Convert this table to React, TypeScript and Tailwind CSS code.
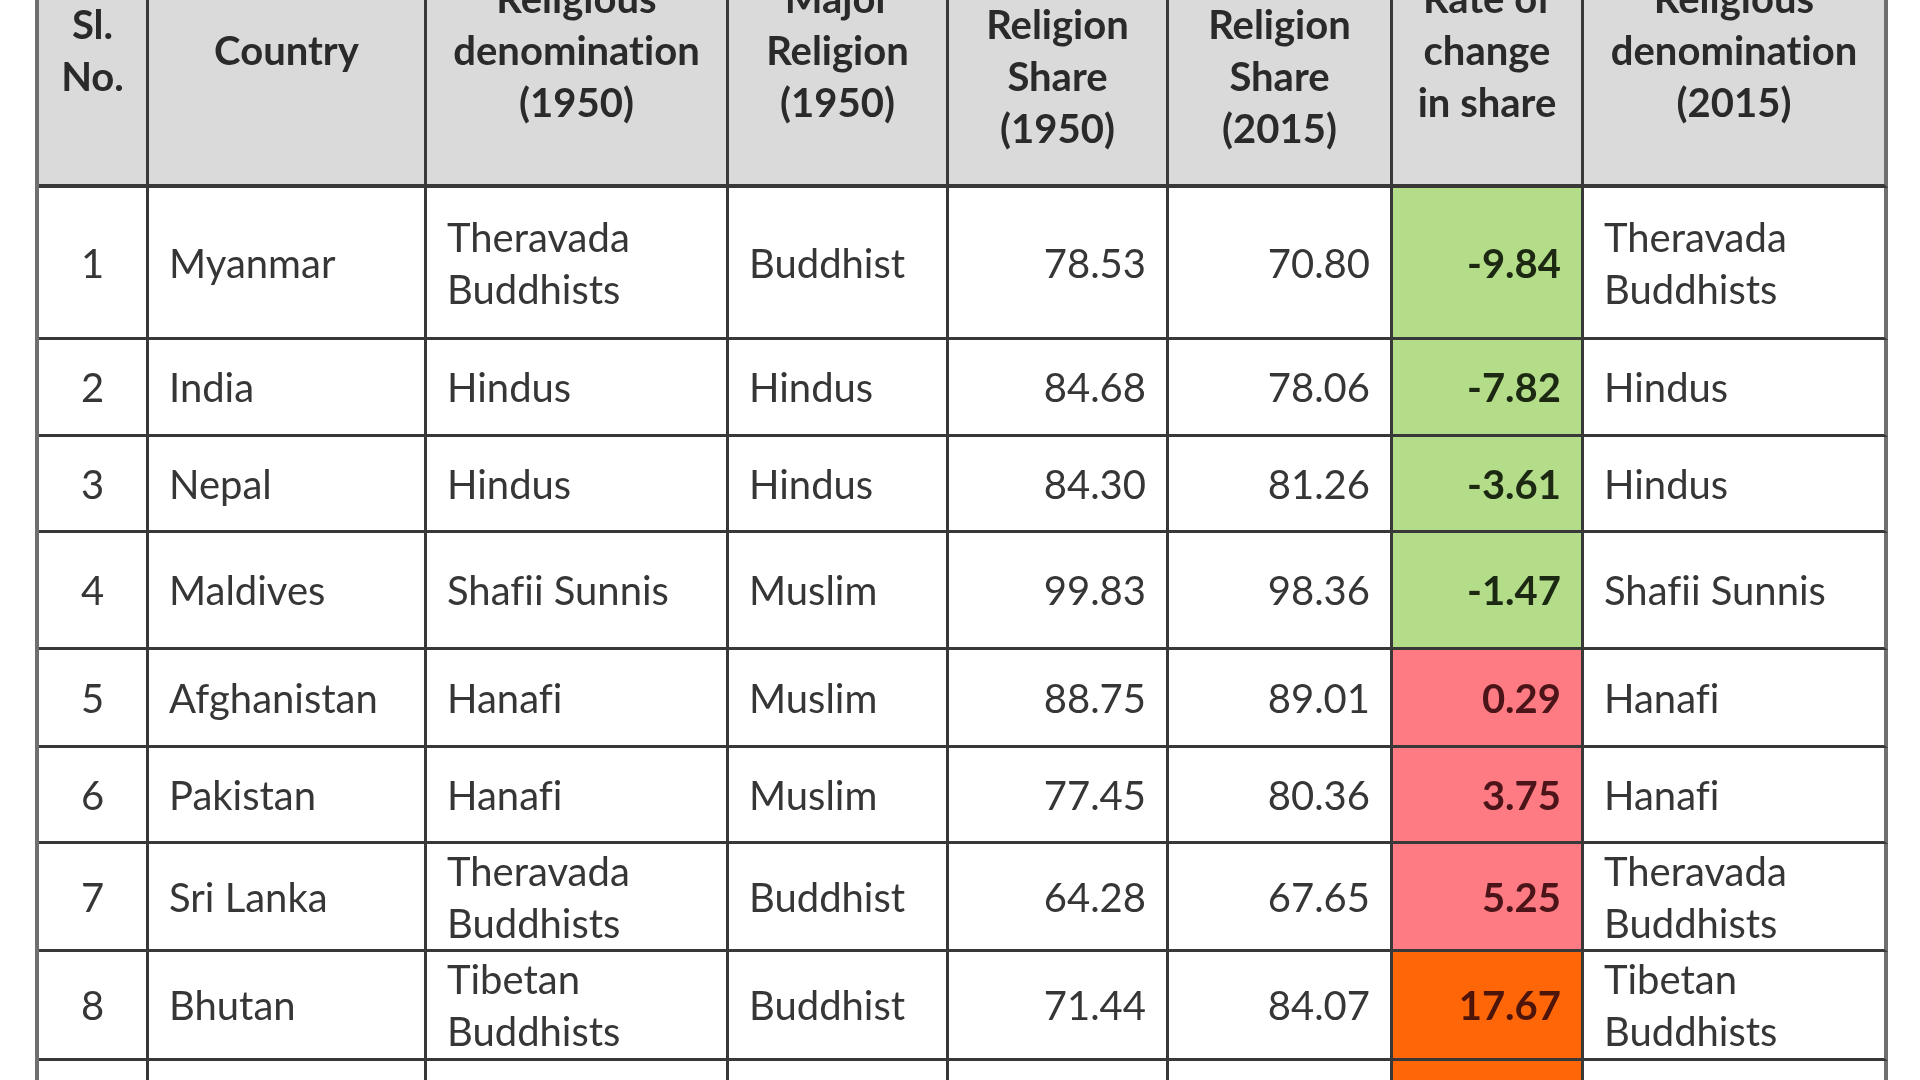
import React from "react";

type Tone = "green" | "pink" | "orange";

interface Row {
  no: number;
  country: string;
  denom1950: string[];
  major: string;
  share1950: string;
  share2015: string;
  rate: string;
  tone: Tone;
  denom2015: string[];
}

const headers: string[][] = [
  ["Sl.", "No."],
  ["Country"],
  ["Religious", "denomination", "(1950)"],
  ["Major", "Religion", "(1950)"],
  ["Major", "Religion", "Share", "(1950)"],
  ["Major", "Religion", "Share", "(2015)"],
  ["Rate of", "change", "in share"],
  ["Religious", "denomination", "(2015)"],
];

const rows: Row[] = [
  { no: 1, country: "Myanmar", denom1950: ["Theravada", "Buddhists"], major: "Buddhist", share1950: "78.53", share2015: "70.80", rate: "-9.84", tone: "green", denom2015: ["Theravada", "Buddhists"] },
  { no: 2, country: "India", denom1950: ["Hindus"], major: "Hindus", share1950: "84.68", share2015: "78.06", rate: "-7.82", tone: "green", denom2015: ["Hindus"] },
  { no: 3, country: "Nepal", denom1950: ["Hindus"], major: "Hindus", share1950: "84.30", share2015: "81.26", rate: "-3.61", tone: "green", denom2015: ["Hindus"] },
  { no: 4, country: "Maldives", denom1950: ["Shafii Sunnis"], major: "Muslim", share1950: "99.83", share2015: "98.36", rate: "-1.47", tone: "green", denom2015: ["Shafii Sunnis"] },
  { no: 5, country: "Afghanistan", denom1950: ["Hanafi"], major: "Muslim", share1950: "88.75", share2015: "89.01", rate: "0.29", tone: "pink", denom2015: ["Hanafi"] },
  { no: 6, country: "Pakistan", denom1950: ["Hanafi"], major: "Muslim", share1950: "77.45", share2015: "80.36", rate: "3.75", tone: "pink", denom2015: ["Hanafi"] },
  { no: 7, country: "Sri Lanka", denom1950: ["Theravada", "Buddhists"], major: "Buddhist", share1950: "64.28", share2015: "67.65", rate: "5.25", tone: "pink", denom2015: ["Theravada", "Buddhists"] },
  { no: 8, country: "Bhutan", denom1950: ["Tibetan", "Buddhists"], major: "Buddhist", share1950: "71.44", share2015: "84.07", rate: "17.67", tone: "orange", denom2015: ["Tibetan", "Buddhists"] },
  { no: 9, country: "Bangladesh", denom1950: ["Hanafi"], major: "Muslim", share1950: "76.31", share2015: "90.50", rate: "18.60", tone: "orange", denom2015: ["Hanafi"] },
];

const toneClass: Record<Tone, string> = {
  green: "bg-[#b3dd88] text-[#1c2812]",
  pink: "bg-[#ff7b83] text-[#4a1418]",
  orange: "bg-[#ff6608] text-[#4d140a]",
};

const cellBase = "flex items-center border-r-[3px] border-b-[3px] border-[#383838] px-[20px]";
const lastCell = "flex items-center border-r-[4px] border-b-[3px] border-b-[#383838] border-r-[#6f6f6f] px-[20px]";

const Lines = ({ lines }: { lines: string[] }) => (
  <div>
    {lines.map((l) => (
      <div key={l}>{l}</div>
    ))}
  </div>
);

export default function App() {
  return (
    <div className="h-[1080px] w-[1920px] overflow-hidden bg-white">
      <div
        className="ml-[35px] mt-[-84px] grid w-fit grid-cols-[110px_278px_302px_220px_220px_224px_191px_304px] grid-rows-[272px_152px_97px_96px_117px_98px_96px_108px_109px_120px] border-l-[4px] border-[#6f6f6f] text-[40px] leading-[52px] text-[#363636] blur-[0.5px] [font-variant-ligatures:none]"
        style={{ fontFamily: "Lato, 'Open Sans', sans-serif" }}
      >
        {headers.map((h, i) => (
          <div
            key={i}
            className={`${i === headers.length - 1 ? lastCell : cellBase} justify-center border-b-[4px] bg-[#dadada] text-center font-bold text-[#2a2a2a]`}
          >
            <Lines lines={h} />
          </div>
        ))}

        {rows.map((r) => (
          <React.Fragment key={r.no}>
            <div className={`${cellBase} justify-center`}>{r.no}</div>
            <div className={cellBase}>{r.country}</div>
            <div className={cellBase}>
              <Lines lines={r.denom1950} />
            </div>
            <div className={cellBase}>{r.major}</div>
            <div className={`${cellBase} justify-end`}>{r.share1950}</div>
            <div className={`${cellBase} justify-end`}>{r.share2015}</div>
            <div className={`${cellBase} justify-end font-bold ${toneClass[r.tone]}`}>{r.rate}</div>
            <div className={lastCell}>
              <Lines lines={r.denom2015} />
            </div>
          </React.Fragment>
        ))}
      </div>
    </div>
  );
}
